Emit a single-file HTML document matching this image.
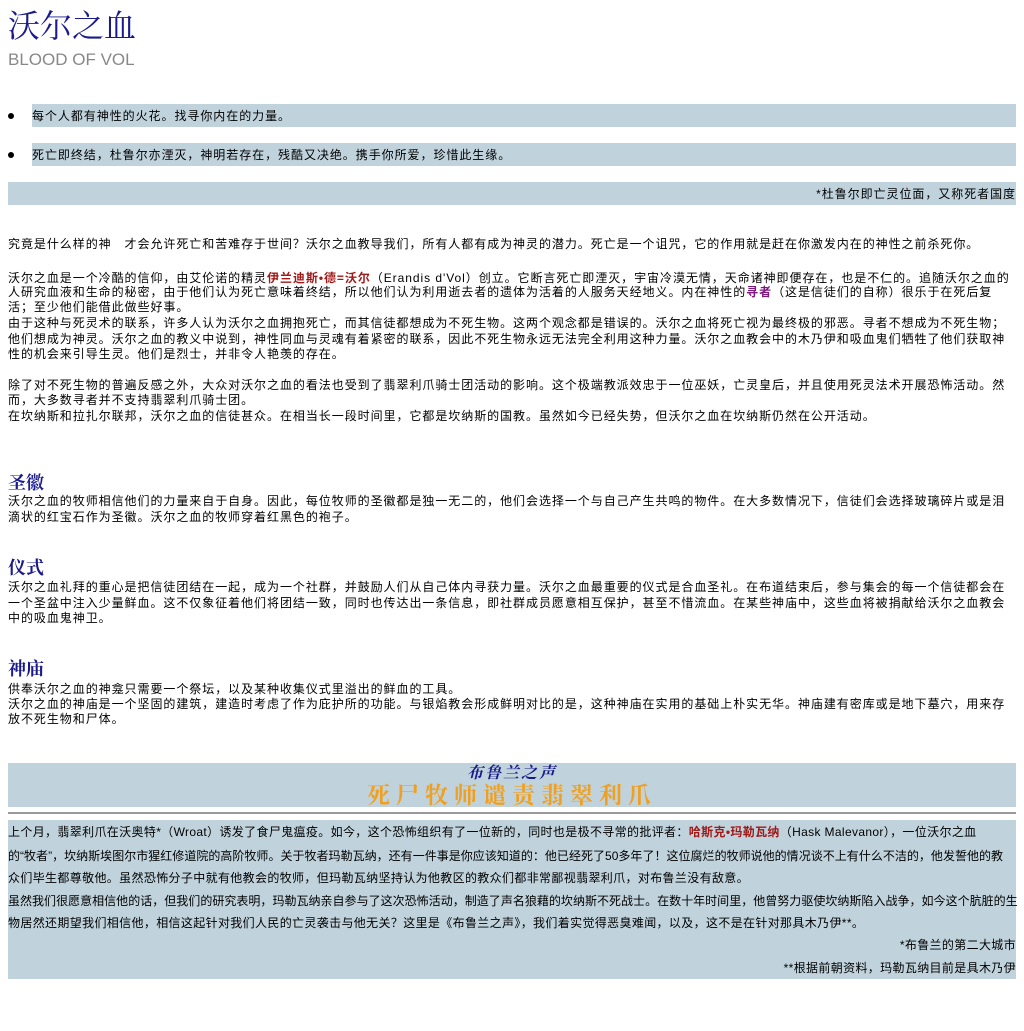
<!DOCTYPE html>
<html><head><meta charset="utf-8"><style>
body{margin:0;width:1024px;height:1031px;background:#fff;position:relative;font-family:"Liberation Sans","Noto Sans CJK SC",sans-serif;font-size:12px;color:#000;overflow:hidden}
.l{position:absolute;left:8px;white-space:nowrap;line-height:14px;height:14px;letter-spacing:0.95px}
.b{letter-spacing:0.35px}
.t{letter-spacing:0.02px}
.bar{position:absolute;background:#c0d3dd}
.h{position:absolute;left:8px;font-family:"Liberation Serif","Noto Serif CJK SC",serif;font-weight:bold;color:#1a1a8c;font-size:18px;line-height:20px}
.r{color:#a01818;font-weight:bold}
.p{color:#801880;font-weight:bold}
.dot{position:absolute;left:8px;width:6px;height:6px;border-radius:50%;background:#000}
</style></head><body>
<div style="position:absolute;left:8px;top:6px;font-family:'Liberation Serif','Noto Serif CJK SC',serif;font-size:32px;line-height:40px;color:#1a1a8c">沃尔之血</div>
<div style="position:absolute;left:8px;top:49px;font-size:17px;line-height:22px;color:#888">BLOOD OF VOL</div>

<div class="bar" style="left:32px;top:104px;width:984px;height:23px"></div>
<div class="dot" style="top:113px"></div>
<div class="l" style="left:32px;top:109px">每个人都有神性的火花。找寻你内在的力量。</div>
<div class="bar" style="left:32px;top:143px;width:984px;height:23px"></div>
<div class="dot" style="top:152px"></div>
<div class="l" style="left:32px;top:148px">死亡即终结，杜鲁尔亦湮灭，神明若存在，残酷又决绝。携手你所爱，珍惜此生缘。</div>
<div class="bar" style="left:8px;top:182px;width:1008px;height:23px"></div>
<div class="l" style="left:auto;right:8px;top:187px">*杜鲁尔即亡灵位面，又称死者国度</div>

<div class="l" style="top:237px">究竟是什么样的神　才会允许死亡和苦难存于世间？沃尔之血教导我们，所有人都有成为神灵的潜力。死亡是一个诅咒，它的作用就是赶在你激发内在的神性之前杀死你。</div>

<div class="l" style="top:271px">沃尔之血是一个冷酷的信仰，由艾伦诺的精灵<span class="r">伊兰迪斯•德=沃尔</span>（Erandis d'Vol）创立。它断言死亡即湮灭，宇宙冷漠无情，天命诸神即便存在，也是不仁的。追随沃尔之血的</div>
<div class="l" style="top:285px">人研究血液和生命的秘密，由于他们认为死亡意味着终结，所以他们认为利用逝去者的遗体为活着的人服务天经地义。内在神性的<span class="p">寻者</span>（这是信徒们的自称）很乐于在死后复</div>
<div class="l" style="top:300px">活；至少他们能借此做些好事。</div>
<div class="l" style="top:316px">由于这种与死灵术的联系，许多人认为沃尔之血拥抱死亡，而其信徒都想成为不死生物。这两个观念都是错误的。沃尔之血将死亡视为最终极的邪恶。寻者不想成为不死生物；</div>
<div class="l" style="top:332px">他们想成为神灵。沃尔之血的教义中说到，神性同血与灵魂有着紧密的联系，因此不死生物永远无法完全利用这种力量。沃尔之血教会中的木乃伊和吸血鬼们牺牲了他们获取神</div>
<div class="l" style="top:347px">性的机会来引导生灵。他们是烈士，并非令人艳羡的存在。</div>

<div class="l" style="top:378px">除了对不死生物的普遍反感之外，大众对沃尔之血的看法也受到了翡翠利爪骑士团活动的影响。这个极端教派效忠于一位巫妖，亡灵皇后，并且使用死灵法术开展恐怖活动。然</div>
<div class="l" style="top:393px">而，大多数寻者并不支持翡翠利爪骑士团。</div>
<div class="l" style="top:409px">在坎纳斯和拉扎尔联邦，沃尔之血的信徒甚众。在相当长一段时间里，它都是坎纳斯的国教。虽然如今已经失势，但沃尔之血在坎纳斯仍然在公开活动。</div>

<div class="h" style="top:473px">圣徽</div>
<div class="l" style="top:494px">沃尔之血的牧师相信他们的力量来自于自身。因此，每位牧师的圣徽都是独一无二的，他们会选择一个与自己产生共鸣的物件。在大多数情况下，信徒们会选择玻璃碎片或是泪</div>
<div class="l" style="top:510px">滴状的红宝石作为圣徽。沃尔之血的牧师穿着红黑色的袍子。</div>

<div class="h" style="top:558px">仪式</div>
<div class="l" style="top:580px">沃尔之血礼拜的重心是把信徒团结在一起，成为一个社群，并鼓励人们从自己体内寻获力量。沃尔之血最重要的仪式是合血圣礼。在布道结束后，参与集会的每一个信徒都会在</div>
<div class="l" style="top:596px">一个圣盆中注入少量鲜血。这不仅象征着他们将团结一致，同时也传达出一条信息，即社群成员愿意相互保护，甚至不惜流血。在某些神庙中，这些血将被捐献给沃尔之血教会</div>
<div class="l" style="top:611px">中的吸血鬼神卫。</div>

<div class="h" style="top:659px">神庙</div>
<div class="l" style="top:682px">供奉沃尔之血的神龛只需要一个祭坛，以及某种收集仪式里溢出的鲜血的工具。</div>
<div class="l" style="top:697px">沃尔之血的神庙是一个坚固的建筑，建造时考虑了作为庇护所的功能。与银焰教会形成鲜明对比的是，这种神庙在实用的基础上朴实无华。神庙建有密库或是地下墓穴，用来存</div>
<div class="l" style="top:712px">放不死生物和尸体。</div>

<div class="bar" style="left:8px;top:763px;width:1008px;height:44px"></div>
<div style="position:absolute;left:0;width:1024px;top:764px;text-align:center;font-family:'Liberation Serif','Noto Serif CJK SC',serif;font-weight:bold;font-style:italic;color:#1a1a8c;font-size:16px;line-height:20px;letter-spacing:2px">布鲁兰之声</div>
<div style="position:absolute;left:0;width:1024px;top:782px;text-align:center;font-family:'Liberation Serif','Noto Serif CJK SC',serif;font-weight:bold;color:#f0a020;font-size:23px;line-height:28px;letter-spacing:6px">死尸牧师谴责翡翠利爪</div>
<div style="position:absolute;left:8px;top:812px;width:1008px;height:2px;background:#999"></div>

<div class="bar" style="left:8px;top:820px;width:1008px;height:159px"></div>
<div class="l b" style="top:825px">上个月，翡翠利爪在沃奥特*（Wroat）诱发了食尸鬼瘟疫。如今，这个恐怖组织有了一位新的，同时也是极不寻常的批评者：<span class="r">哈斯克•玛勒瓦纳</span>（Hask Malevanor），一位沃尔之血</div>
<div class="l t" style="top:849px">的“牧者”，坎纳斯埃图尔市猩红修道院的高阶牧师。关于牧者玛勒瓦纳，还有一件事是你应该知道的：他已经死了50多年了！这位腐烂的牧师说他的情况谈不上有什么不洁的，他发誓他的教</div>
<div class="l b" style="top:871px">众们毕生都尊敬他。虽然恐怖分子中就有他教会的牧师，但玛勒瓦纳坚持认为他教区的教众们都非常鄙视翡翠利爪，对布鲁兰没有敌意。</div>
<div class="l t" style="top:894px">虽然我们很愿意相信他的话，但我们的研究表明，玛勒瓦纳亲自参与了这次恐怖活动，制造了声名狼藉的坎纳斯不死战士。在数十年时间里，他曾努力驱使坎纳斯陷入战争，如今这个肮脏的生</div>
<div class="l b" style="top:916px">物居然还期望我们相信他，相信这起针对我们人民的亡灵袭击与他无关？这里是《布鲁兰之声》，我们着实觉得恶臭难闻，以及，这不是在针对那具木乃伊**。</div>
<div class="l b" style="left:auto;right:8px;top:938px">*布鲁兰的第二大城市</div>
<div class="l b" style="left:auto;right:8px;top:961px">**根据前朝资料，玛勒瓦纳目前是具木乃伊</div>
</body></html>
